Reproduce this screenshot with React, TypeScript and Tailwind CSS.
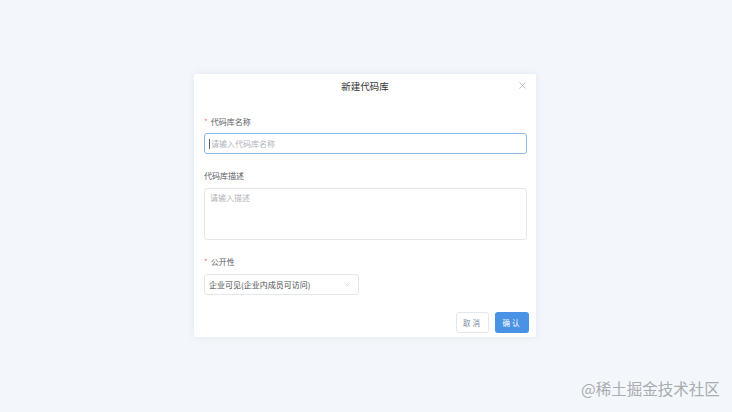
import { X, ChevronDown } from "lucide-react"

const font = { fontFamily: '"Noto Sans CJK SC", "Noto Sans", sans-serif' }

function Label({ text, required }: { text: string; required?: boolean }) {
  return (
    <div className="flex items-center h-[12px] text-[8px] text-[#5a5e66] leading-none">
      {required && <span className="text-[#f56c6c] mr-[3px]">*</span>}
      <span>{text}</span>
    </div>
  )
}

export default function App() {
  return (
    <div className="w-[732px] h-[412px] bg-[#f3f6fb] relative overflow-hidden" style={font}>
      <div className="absolute left-[194px] top-[74px] w-[342px] h-[263px] bg-white rounded-[2px] shadow-[0_0_6px_rgba(180,195,215,0.25)] flex flex-col">
        <div className="relative h-[24px] flex items-center justify-center text-[9.5px] text-[#303133]">
          新建代码库
          <X className="absolute right-[8px] top-[6px] w-[11px] h-[11px] text-[#9a9ea5]" strokeWidth={1.4} />
        </div>
        <div className="flex flex-col px-[10px] pt-[18px]">
          <Label text="代码库名称" required />
          <div className="mt-[5px] w-[323px] h-[21px] border border-[#8dbbe6] rounded-[3px] flex items-center pl-[4px] text-[8px] text-[#b0b4bb]">
            <span className="w-px h-[10px] bg-[#606266] mr-px" />
            请输入代码库名称
          </div>
          <div className="mt-[16px]">
            <Label text="代码库描述" />
          </div>
          <div className="mt-[6px] w-[323px] h-[52px] border border-[#e3e6eb] rounded-[3px] px-[5px] pt-[3px] text-[8px] text-[#b0b4bb]">
            请输入描述
          </div>
          <div className="mt-[16px]">
            <Label text="公开性" required />
          </div>
          <div className="mt-[6px] w-[155px] h-[21px] border border-[#e3e6eb] rounded-[3px] flex items-center justify-between pl-[4px] pr-[6px] text-[8px] text-[#4a4d52]">
            <span>企业可见(企业内成员可访问)</span>
            <ChevronDown className="w-[9px] h-[9px] text-[#b6bac0]" strokeWidth={1.5} />
          </div>
          <div className="mt-[17px] flex justify-end gap-[6px] mr-[-3px]">
            <button className="w-[33px] h-[21px] border border-[#e3e6eb] rounded-[3px] bg-white text-[7.5px] text-[#7a8a9c] tracking-[2px]">
              取消
            </button>
            <button className="w-[34px] h-[21px] rounded-[3px] bg-[#4a92e4] text-[7.5px] text-white tracking-[2px]">
              确认
            </button>
          </div>
        </div>
      </div>
      <div className="absolute left-[581px] top-[377px] text-[15.5px] text-[#a9acb1] leading-[22px]">@稀土掘金技术社区</div>
    </div>
  )
}
